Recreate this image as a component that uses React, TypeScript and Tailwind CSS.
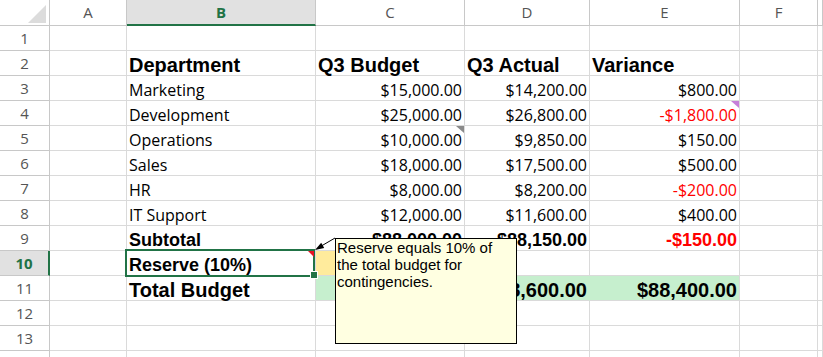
import React from 'react';

type Kind = 'n' | 'b18' | 'b20';

interface CellDef {
    t?: string;
    right?: boolean;
    kind?: Kind;
    red?: boolean;
    fill?: 'y' | 'g';
    mark?: 'purple' | 'gray' | 'red';
    selected?: boolean;
}

const COLS = ['A', 'B', 'C', 'D', 'E', 'F', 'G'];

// --- contenido de la hoja (fila -> columna -> celda) ---
const SHEET: Record<number, Record<string, CellDef>> = {
    2: {
        B: { t: 'Department', kind: 'b20' },
        C: { t: 'Q3 Budget', kind: 'b20' },
        D: { t: 'Q3 Actual', kind: 'b20' },
        E: { t: 'Variance', kind: 'b20' },
    },
    3: { B: { t: 'Marketing' }, C: { t: '$15,000.00', right: true }, D: { t: '$14,200.00', right: true }, E: { t: '$800.00', right: true } },
    4: {
        B: { t: 'Development' },
        C: { t: '$25,000.00', right: true },
        D: { t: '$26,800.00', right: true },
        E: { t: '-$1,800.00', right: true, red: true, mark: 'purple' },
    },
    5: { B: { t: 'Operations' }, C: { t: '$10,000.00', right: true, mark: 'gray' }, D: { t: '$9,850.00', right: true }, E: { t: '$150.00', right: true } },
    6: { B: { t: 'Sales' }, C: { t: '$18,000.00', right: true }, D: { t: '$17,500.00', right: true }, E: { t: '$500.00', right: true } },
    7: { B: { t: 'HR' }, C: { t: '$8,000.00', right: true }, D: { t: '$8,200.00', right: true }, E: { t: '-$200.00', right: true, red: true } },
    8: { B: { t: 'IT Support' }, C: { t: '$12,000.00', right: true }, D: { t: '$11,600.00', right: true }, E: { t: '$400.00', right: true } },
    9: {
        B: { t: 'Subtotal', kind: 'b18' },
        C: { t: '$88,000.00', kind: 'b18', right: true },
        D: { t: '$88,150.00', kind: 'b18', right: true },
        E: { t: '-$150.00', kind: 'b18', right: true, red: true },
    },
    10: {
        B: { t: 'Reserve (10%)', kind: 'b18', mark: 'red', selected: true },
        C: { t: '$8,800.00', kind: 'b18', right: true, fill: 'y' },
    },
    11: {
        B: { t: 'Total Budget', kind: 'b20' },
        C: { t: '$96,800.00', kind: 'b20', right: true, fill: 'g' },
        D: { t: '$88,600.00', kind: 'b20', right: true, fill: 'g' },
        E: { t: '$88,400.00', kind: 'b20', right: true, fill: 'g' },
    },
};

const kindClass: Record<Kind, string> = {
    n: "font-['Open_Sans',sans-serif] text-[16px]",
    b18: "font-['Liberation_Sans',Arial,sans-serif] font-bold text-[18px]",
    b20: "font-['Liberation_Sans',Arial,sans-serif] font-bold text-[20px]",
};

const markClass = {
    purple: 'right-0 top-0 w-[8px] h-[7px] bg-[#c67fd8]',
    gray: 'right-0 top-0 w-[8px] h-[7px] bg-[#8a8a8a]',
    red: 'right-[1px] top-0 w-[6px] h-[6px] bg-[#e81123] z-20',
};

const Cell: React.FC<{ c?: CellDef; col: string }> = ({ c, col }) => {
    const fillBg = c?.fill === 'y' ? 'bg-[#ffeb9c]' : c?.fill === 'g' ? 'bg-[#c6efce]' : 'bg-white';
    const rightBorder = c?.fill && col !== 'E' ? (c.fill === 'y' ? 'border-r-[#ffeb9c]' : 'border-r-[#c6efce]') : '';
    return (
        <div
            className={`relative flex items-end whitespace-nowrap border-r border-b border-[#dadada] px-[2px] leading-[20px] ${fillBg} ${rightBorder} ${
                c?.right ? 'justify-end' : 'justify-start'
            } ${kindClass[c?.kind ?? 'n']} ${c?.red ? 'text-[#ff0000]' : 'text-black'}`}
        >
            {c?.t}
            {c?.mark && <span className={`absolute [clip-path:polygon(0_0,100%_0,100%_100%)] ${markClass[c.mark]}`} />}
            {c?.selected && (
                <>
                    <span className="absolute left-[-2px] top-[-2px] w-[190px] h-[28px] border-2 border-[#217346] z-10" />
                    <span className="absolute left-[183px] top-[20px] w-[8px] h-[8px] bg-[#217346] border border-white z-10" />
                </>
            )}
        </div>
    );
};

export default function App() {
    const rows = Array.from({ length: 14 }, (_, i) => i + 1);

    return (
        <div className="relative w-[823px] h-[357px] overflow-hidden bg-white">
            <div className="grid grid-cols-[50px_77px_189px_149px_125px_150px_78px_1fr] grid-rows-[26px_repeat(14,25px)]">
                {/* esquina */}
                <div className="relative border-r border-b border-[#c8c8c8] bg-white">
                    <span className="absolute left-[28px] top-[5px] w-[18px] h-[18px] bg-[#dcdcdc] [clip-path:polygon(100%_0,100%_100%,0_100%)]" />
                </div>
                {COLS.map((col) =>
                    col === 'B' ? (
                        <div
                            key={col}
                            className="flex items-center justify-center border-r border-[#c8c8c8] border-b-2 border-b-[#217346] bg-[#e1e1e1] font-['Open_Sans',sans-serif] text-[15px] font-bold text-[#217346]"
                        >
                            {col}
                        </div>
                    ) : (
                        <div
                            key={col}
                            className="flex items-center justify-center border-r border-b border-[#c8c8c8] bg-white font-['Open_Sans',sans-serif] text-[15px] text-[#555]"
                        >
                            {col === 'G' ? '' : col}
                        </div>
                    )
                )}

                {rows.map((r) => (
                    <React.Fragment key={r}>
                        {r === 10 ? (
                            <div className="flex items-center justify-center border-b border-[#c8c8c8] border-r-2 border-r-[#217346] bg-[#e1e1e1] font-['Open_Sans',sans-serif] text-[15px] font-bold text-[#217346]">
                                {r}
                            </div>
                        ) : (
                            <div className="flex items-center justify-center border-r border-b border-[#c8c8c8] bg-white font-['Open_Sans',sans-serif] text-[15px] text-[#555]">
                                {r < 14 ? r : ''}
                            </div>
                        )}
                        {COLS.map((col) => (
                            <Cell key={col} col={col} c={SHEET[r]?.[col]} />
                        ))}
                    </React.Fragment>
                ))}
            </div>

            {/* flecha del comentario */}
            <svg className="absolute left-[310px] top-[234px] z-30" width="30" height="22" viewBox="0 0 30 22">
                <line x1="25" y1="4" x2="12" y2="11.6" stroke="black" strokeWidth="1" />
                <polygon points="5,16 14.2,14 11.2,8.8" fill="black" />
            </svg>

            {/* comentario */}
            <div className="absolute left-[335px] top-[238px] z-30 w-[182px] h-[106px] border border-black bg-[#ffffe1] pl-[1px] font-['Liberation_Sans',Arial,sans-serif] text-[15px] leading-[17px] text-black">
                Reserve equals 10% of
                <br />
                the total budget for
                <br />
                contingencies.
            </div>
        </div>
    );
}
